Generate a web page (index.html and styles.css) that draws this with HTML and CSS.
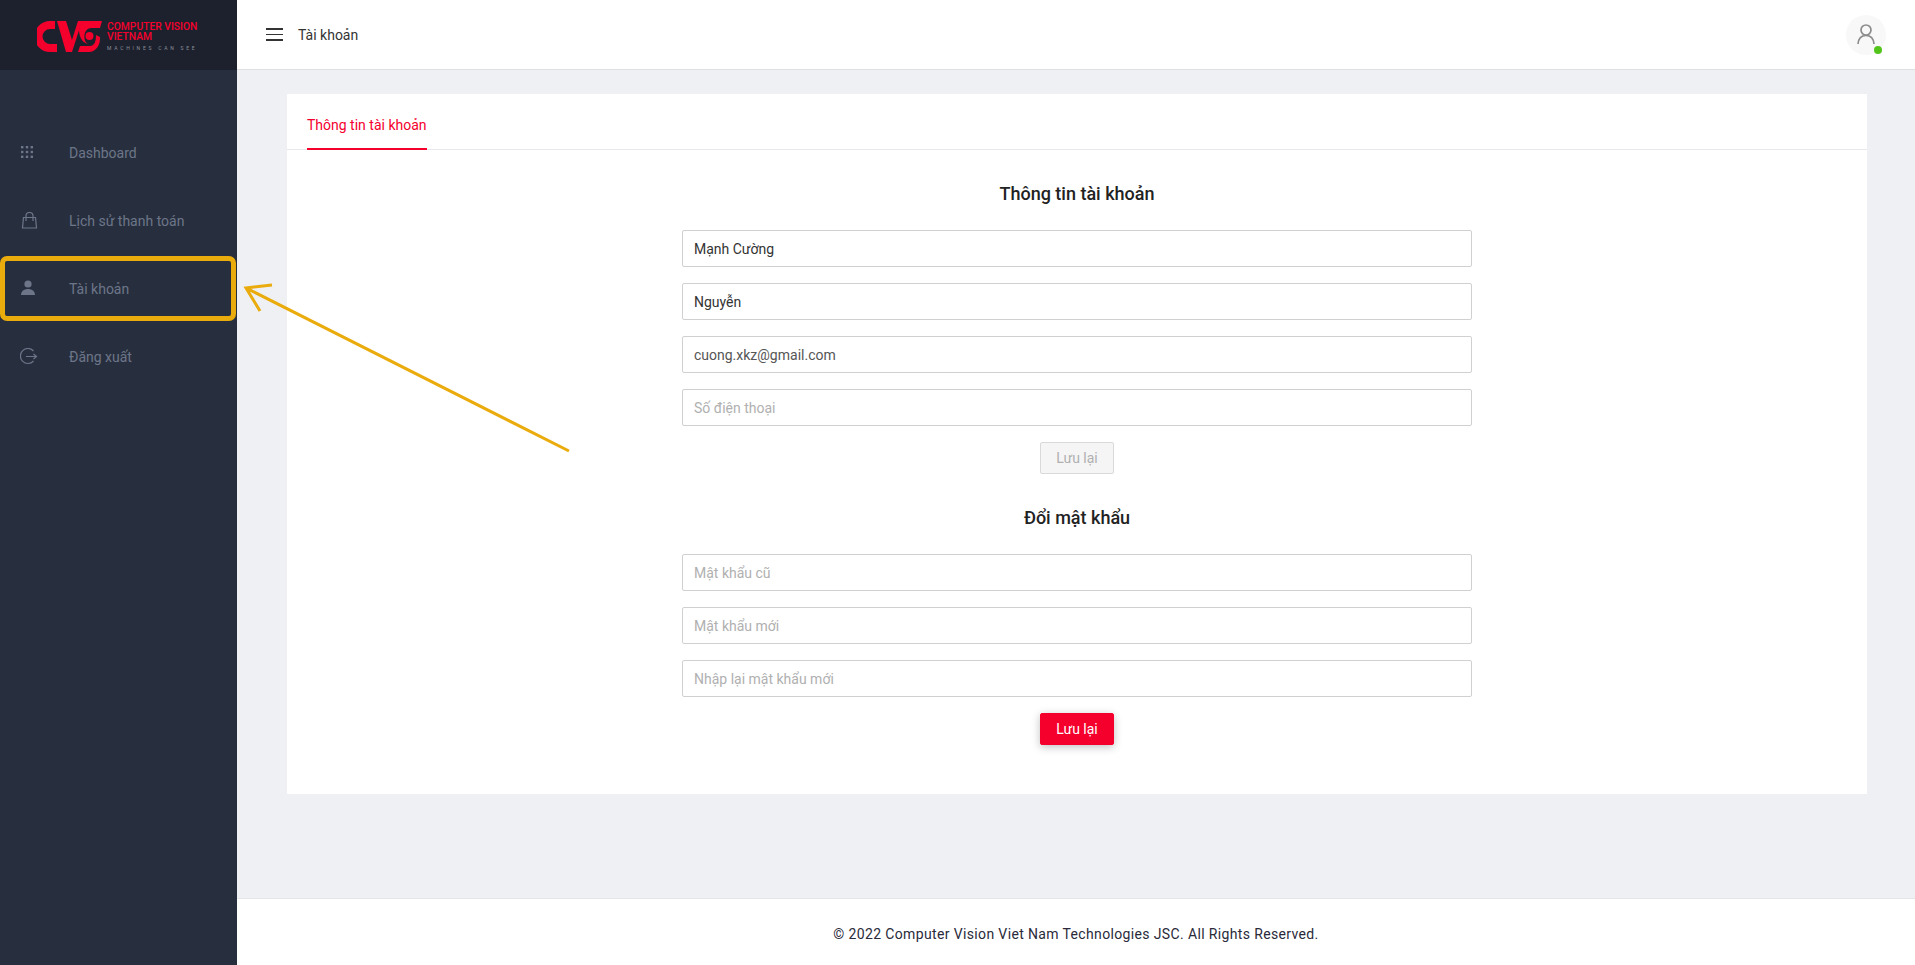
FILE: index.html
```html
<!DOCTYPE html>
<html lang="en">

<head>
    <meta charset="UTF-8">
    <meta name="viewport" content="width=device-width, initial-scale=1.0">
    <title>Tài khoản</title>
    <link rel="stylesheet" href="styles.css">
</head>
<body>
    <div class="layout">
        <aside class="sidebar">
            <div class="logo">
                <svg class="logo-mark" viewBox="37 21 65 31" width="65" height="31">
                    <path d="M55 25 H50 a11.5 11.5 0 0 0 0 23 H57" fill="none" stroke="#f5002d" stroke-width="8"/>
                    <path d="M57 21 H66 L72 40 L78 21 H82 L72 52 H66 Z" fill="#f5002d"/>
                    <path d="M80 21 H102 L100 28 H92 C86 28 84 33 84.5 38 C84.7 41 86 43 88 44 C82 43 79 36 79 30 Z" fill="#f5002d"/>
                    <path d="M96 35 L100 37 C100.5 45 96 52 89 52 H78 L80 46 H90 C94 46 96 42 96 35 Z" fill="#f5002d"/>
                    <circle cx="89.5" cy="36" r="4" fill="#f5002d"/>
                </svg>
                <div class="logo-text">
                    <div class="logo-name">COMPUTER VISION<br>VIETNAM</div>
                    <div class="logo-slogan">MACHINES CAN SEE</div>
                </div>
            </div>
            <nav class="menu">
                <a class="menu-item">
                    <svg class="menu-icon" viewBox="0 0 18 18" width="18" height="18">
                        <g fill="#6d7688">
                            <rect x="1" y="2" width="2.4" height="2.4"/><rect x="5.8" y="2" width="2.4" height="2.4"/><rect x="10.6" y="2" width="2.4" height="2.4"/>
                            <rect x="1" y="6.8" width="2.4" height="2.4"/><rect x="5.8" y="6.8" width="2.4" height="2.4"/><rect x="10.6" y="6.8" width="2.4" height="2.4"/>
                            <rect x="1" y="11.6" width="2.4" height="2.4"/><rect x="5.8" y="11.6" width="2.4" height="2.4"/><rect x="10.6" y="11.6" width="2.4" height="2.4"/>
                        </g>
                    </svg>
                    <span>Dashboard</span>
                </a>
                <a class="menu-item">
                    <svg class="menu-icon" viewBox="0 0 18 18" width="18" height="18">
                        <path d="M3.5 5.5 H15.5 L16.5 16 H2.5 Z M6 9 V4 a3.5 3.5 0 0 1 7 0 V9" fill="none" stroke="#6d7688" stroke-width="1.2"/>
                    </svg>
                    <span>Lịch sử thanh toán</span>
                </a>
                <a class="menu-item">
                    <svg class="menu-icon" viewBox="0 0 18 18" width="18" height="18">
                        <circle cx="8" cy="4" r="3.6" fill="#6d7688"/>
                        <path d="M1 15 C1 11 4.5 9 8 9 C11.5 9 15 11 15 15 Z" fill="#6d7688"/>
                    </svg>
                    <span>Tài khoản</span>
                    <div class="highlight"></div>
                </a>
                <a class="menu-item">
                    <svg class="menu-icon" viewBox="0 0 18 18" width="18" height="18">
                        <path d="M13.5 3 A7.5 7.5 0 1 0 13.5 13 M6 8.5 H16.5 M13.5 6 L16.5 8.5 L13.5 11" fill="none" stroke="#6d7688" stroke-width="1.2"/>
                    </svg>
                    <span>Đăng xuất</span>
                </a>
            </nav>
        </aside>

        <div class="main">
            <header class="topbar">
                <div class="hamburger"><i></i><i></i><i></i></div>
                <div class="page-title">Tài khoản</div>
                <div class="avatar">
                    <svg viewBox="0 0 40 40" width="40" height="40">
                        <circle cx="20" cy="15" r="5" fill="none" stroke="#8c8c8c" stroke-width="1.7"/>
                        <path d="M12 29 C12.5 23 16 20.5 20 20.5 C24 20.5 27.5 23 28 29" fill="none" stroke="#8c8c8c" stroke-width="1.7"/>
                    </svg>
                    <span class="status-dot"></span>
                </div>
            </header>

            <main class="content">
                <section class="card">
                    <div class="tabs">
                        <a class="tab">Thông tin tài khoản</a>
                    </div>
                    <form class="account-form">
                        <h2>Thông tin tài khoản</h2>
                        <input type="text" value="Mạnh Cường">
                        <input type="text" value="Nguyễn">
                        <input type="text" class="readonly" value="cuong.xkz@gmail.com" readonly>
                        <input type="text" placeholder="Số điện thoại">
                        <button type="button" class="btn" disabled>Lưu lại</button>

                        <h2 class="second">Đổi mật khẩu</h2>
                        <input type="password" placeholder="Mật khẩu cũ">
                        <input type="password" placeholder="Mật khẩu mới">
                        <input type="password" placeholder="Nhập lại mật khẩu mới">
                        <button type="button" class="btn btn-primary">Lưu lại</button>
                    </form>
                </section>
            </main>

            <footer class="footer">© 2022 Computer Vision Viet Nam Technologies JSC. All Rights Reserved.</footer>
        </div>
    </div>

    <!-- annotation arrow drawn over the page -->
    <svg class="arrow" viewBox="0 0 340 175" width="340" height="175">
        <path d="M326 170 L3 7 M29 4 L3 7 L17 30" fill="none" stroke="#eaab0c" stroke-width="3"/>
    </svg>
</body>
</html>
```

FILE: styles.css
```css
* {
    box-sizing: border-box;
}

body {
    font-family: 'Roboto', sans-serif;
    font-size: 14px;
    background-color: #eff0f4;
    color: #333;
    margin: 0;
    padding: 0;
}

.layout {
    display: flex;
    min-height: 965px;
}

/* Sidebar */
.sidebar {
    width: 237px;
    flex-shrink: 0;
    background-color: #272f3f;
}

.logo {
    height: 70px;
    background-color: #1c212d;
    display: flex;
    align-items: flex-start;
    padding: 21px 0 0 37px;
    gap: 5px;
}

.logo-mark {
    flex-shrink: 0;
}

.logo-name {
    font-size: 10.3px;
    line-height: 10px;
    font-weight: 500;
    color: #f5002d;
    white-space: nowrap;
    margin-top: 1px;
}

.logo-slogan {
    font-size: 5px;
    line-height: 7px;
    letter-spacing: 2.75px;
    color: #8b8f98;
    white-space: nowrap;
    margin-top: 3px;
}

.menu {
    padding-top: 49px;
}

.menu-item {
    position: relative;
    display: flex;
    align-items: center;
    height: 68px;
    padding-left: 20px;
    color: #6d7688;
    font-size: 14px;
}

.menu-icon {
    margin-right: 31px;
    flex-shrink: 0;
}

.highlight {
    position: absolute;
    left: 0;
    top: 1px;
    width: 236px;
    height: 65px;
    border: 5px solid #eaab0c;
    border-radius: 7px;
}

/* Main column */
.main {
    flex: 1;
    display: flex;
    flex-direction: column;
    min-width: 0;
}

.topbar {
    height: 70px;
    background-color: #fff;
    border-bottom: 1px solid #dfe0e4;
    display: flex;
    align-items: center;
    padding-left: 29px;
    padding-right: 29px;
}

.hamburger {
    width: 17px;
    margin-right: 15px;
}

.hamburger i {
    display: block;
    height: 1.5px;
    background-color: #333;
    margin-bottom: 4px;
}

.hamburger i:last-child {
    margin-bottom: 0;
}

.page-title {
    flex: 1;
    color: #333;
}

.avatar {
    position: relative;
    width: 40px;
    height: 40px;
    border-radius: 50%;
    background-color: #f8f8f8;
}

.status-dot {
    position: absolute;
    left: 28px;
    top: 31px;
    width: 8px;
    height: 8px;
    border-radius: 50%;
    background-color: #52c41a;
}

.content {
    flex: 1;
    padding: 24px 48px 0 50px;
}

/* Card */
.card {
    background-color: #fff;
    height: 700px;
}

.tabs {
    height: 56px;
    border-bottom: 1px solid #e8e8ec;
    padding-left: 20px;
}

.tab {
    display: inline-block;
    height: 56px;
    line-height: 62px;
    color: #f5002d;
    border-bottom: 2px solid #f5002d;
}

.account-form {
    width: 790px;
    margin: 0 auto;
    display: flex;
    flex-direction: column;
    align-items: center;
    padding-top: 33px;
}

.account-form h2 {
    font-size: 18px;
    line-height: 22px;
    font-weight: 500;
    color: #222;
    margin: 0 0 25px;
}

.account-form h2.second {
    margin-top: 33px;
    margin-bottom: 25px;
}

.account-form input {
    width: 100%;
    height: 37px;
    padding: 0 11px;
    margin-bottom: 16px;
    border: 1px solid #d0d0d0;
    border-radius: 2px;
    font-family: 'Roboto', sans-serif;
    font-size: 14px;
    color: #333;
    background-color: #fff;
    outline: none;
}

.account-form input.readonly {
    color: #555;
}

.account-form input::placeholder {
    color: #b0b0b0;
}

.btn {
    width: 74px;
    height: 32px;
    border: 1px solid #d9d9d9;
    border-radius: 2px;
    background-color: #f5f5f5;
    color: #b0b0b0;
    font-family: 'Roboto', sans-serif;
    font-size: 14px;
    padding: 0;
}

.btn-primary {
    background-color: #f5002d;
    border-color: #f5002d;
    color: #fff;
    box-shadow: 0 2px 8px rgba(0, 0, 0, 0.25);
}

/* Footer */
.footer {
    height: 67px;
    background-color: #fff;
    border-top: 1px solid #e4e5e9;
    text-align: center;
    line-height: 70px;
    letter-spacing: 0.36px;
    color: #2a2a3a;
}

/* Annotation */
.arrow {
    position: absolute;
    left: 243px;
    top: 281px;
}
```
